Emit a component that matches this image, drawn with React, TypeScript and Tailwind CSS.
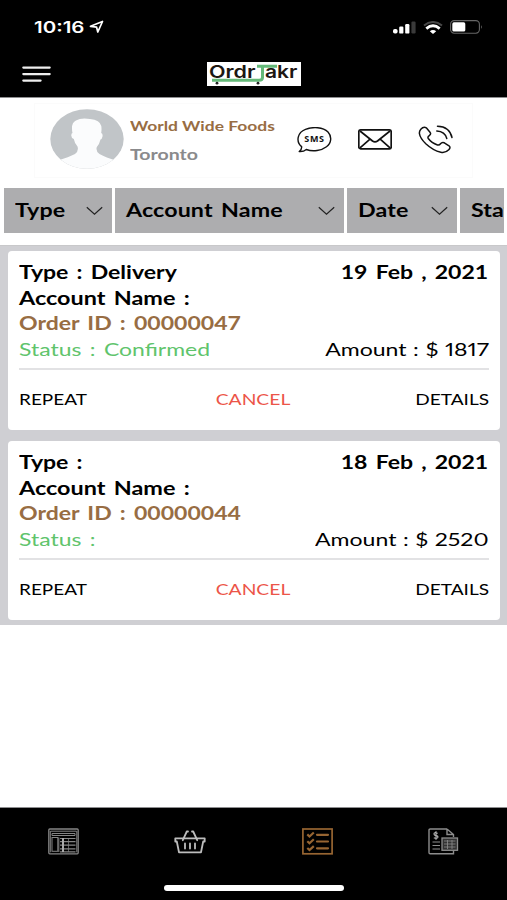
import clsx from "clsx";
import type { ReactNode } from "react";

const ORDERS = [
  {
    id: "00000047",
    type: "Delivery",
    account: "",
    status: "Confirmed",
    date: "19 Feb , 2021",
    amount: 1817,
  },
  {
    id: "00000044",
    type: "",
    account: "",
    status: "",
    date: "18 Feb , 2021",
    amount: 2520,
  },
];

type Order = (typeof ORDERS)[number];

const FILTERS = [
  { label: "Type", width: "w-[108px]" },
  { label: "Account Name", width: "w-[229px]" },
  { label: "Date", width: "w-[110px]" },
  { label: "Status", width: "w-[130px]" },
];

type WideProps = {
  children: ReactNode;
  className?: string;
};

// Lato stretched sideways, grows away from its origin
function Wide({ children, className }: WideProps) {
  return (
    <span className={clsx("inline-block whitespace-pre", className)}>
      {children}
    </span>
  );
}

function StatusBar() {
  return (
    <div className="flex h-[54px] items-center justify-between pl-[34px] pr-6 text-white">
      <div className="flex items-center">
        <span className="w-[55px] whitespace-pre font-['Inter'] text-base font-semibold">
          <span className="inline-block origin-left scale-x-[1.28]">10:16</span>
        </span>
        <svg width="16" height="14" viewBox="0 0 16 14" fill="none">
          <path
            d="M1.5 6.3 13.5 1.5 8.8 12 7.6 7.2Z"
            stroke="#fff"
            strokeWidth="1.7"
            strokeLinejoin="round"
          />
        </svg>
      </div>
      <div className="flex items-center gap-[7px]">
        <svg width="23" height="13" viewBox="0 0 23 13" fill="#fff">
          <rect x="0" y="8" width="4.6" height="4.6" rx="1.8" />
          <rect x="6.2" y="5.5" width="4.2" height="7.1" rx="1.2" />
          <rect x="12.2" y="3" width="4.2" height="9.6" rx="1.2" />
          <rect x="18.4" y="0.5" width="4.2" height="12" rx="1.2" fill="#3a3a3a" />
        </svg>
        <svg width="20" height="13" viewBox="0 0 20 13" fill="none">
          <path d="M1 4.5Q10-2.5 19 4.5" stroke="#484848" strokeWidth="2" />
          <path d="M3.3 7.6Q10 2 16.7 7.6" stroke="#fff" strokeWidth="2.8" />
          <path d="M6.8 10.2Q10 7.6 13.2 10.2L10 13Z" fill="#fff" />
        </svg>
        <svg width="33" height="14" viewBox="0 0 33 14" fill="none">
          <rect
            x="0.6"
            y="0.6"
            width="28.8"
            height="12.6"
            rx="3.6"
            stroke="#666"
            strokeWidth="1.1"
          />
          <rect x="2.3" y="2.3" width="13" height="9.3" rx="1.6" fill="#fff" />
          <path d="M31 5q1.6 2 0 4z" fill="#777" />
        </svg>
      </div>
    </div>
  );
}

function Logo() {
  return (
    <div className="relative h-6 w-[94px] bg-white font-['Inter'] text-[17.5px] font-semibold leading-none text-[#1d1712]">
      {/* the T of the name is a shopping cart */}
      <svg
        className="absolute inset-0"
        width="94"
        height="24"
        viewBox="0 0 94 24"
        fill="none"
      >
        <path
          d="M50 4.2H70M55.5 4.2V15.500Q55.5 18.2 52 18.2H5"
          stroke="#64b978"
          strokeWidth="3"
        />
        <circle cx="10" cy="21.2" r="1.4" fill="#222" />
        <circle cx="51" cy="21.2" r="1.4" fill="#222" />
      </svg>
      <span className="absolute left-[1.5px] top-[0.5px] origin-left scale-x-[1.23]">
        Ordr
      </span>
      <span className="absolute left-[58px] top-[0.5px] origin-left scale-x-[1.2]">
        akr
      </span>
    </div>
  );
}

function Header() {
  return (
    <header className="h-[98px] border-b border-[#8e8e90] bg-black">
      <StatusBar />
      <div className="flex items-center pl-[22px] pt-2">
        <svg width="29" height="16" viewBox="0 0 29 16" stroke="#eee">
          <path
            d="M1.3 1.6H27.7M1.3 8.1H27.7M1.3 14.6H18.6"
            strokeWidth="2.2"
            strokeLinecap="round"
          />
        </svg>
        <div className="ml-[156px]">
          <Logo />
        </div>
      </div>
    </header>
  );
}

function Avatar() {
  return (
    <svg width="74" height="60" viewBox="0 0 74 60">
      <defs>
        <clipPath id="avatar">
          <ellipse cx="37" cy="30" rx="36.7" ry="29.7" />
        </clipPath>
      </defs>
      <g clipPath="url(#avatar)">
        <rect width="74" height="60" fill="#c1c5c8" />
        <path
          d="M8 51.5Q19 48 25 45Q29 42 27.5 37.5Q24.5 34 23.8 30Q21 29 21.3 26Q21.5 24 22.5 24Q20.5 14 26 11.5Q31 8.5 40 10Q50 11 51.3 17Q51.8 20 51.2 24Q53 24.5 52.5 27.5Q52 30 50.5 30.5Q49.5 35 46.8 38Q45.5 42.5 49.5 45Q56 48.5 66 51.5V62H8Z"
          fill="#fbfcfd"
        />
      </g>
    </svg>
  );
}

function ContactActions() {
  return (
    <div className="flex items-center">
      <div className="relative flex h-[26px] w-[35px] items-center justify-center">
        <svg
          className="absolute inset-0"
          width="35"
          height="26"
          viewBox="0 0 35 26"
          fill="none"
          stroke="#111"
          strokeWidth="1.4"
          strokeLinejoin="round"
        >
          <path d="M4.6 19.6C-1.5 14.5 .5 5.2 8.5 2.3C16-.4 26-.1 31 5C35 9.3 34.6 16 29.5 19.7C24.5 23.6 16 24.9 9.3 22.5Q6.5 24.9 2.2 24.5Q5 22.5 4.6 19.6Z" />
        </svg>
        <span className="relative -top-px font-['Open_Sans'] text-[9px] font-bold leading-none tracking-[0.7px] text-[#111]">
          SMS
        </span>
      </div>
      <svg
        className="ml-[26px]"
        width="34"
        height="21"
        viewBox="0 0 34 21"
        fill="none"
        stroke="#111"
        strokeWidth="1.7"
        strokeLinejoin="round"
      >
        <rect x="0.8" y="0.9" width="32.4" height="18.9" rx="1.8" />
        <path d="M2 2 14.5 12Q17 13.7 19.5 12L32 2M2 18.9 12 10.2M32 18.9 22.2 10.2" />
      </svg>
      <svg
        className="ml-[26px]"
        width="36"
        height="29"
        viewBox="0 0 36 29"
        fill="none"
        stroke="#111"
        strokeWidth="1.5"
        strokeLinecap="round"
        strokeLinejoin="round"
      >
        <path d="M2.800 4.2Q5.5 1.3 8.3 2.8L12 7.2Q13.500 9 11.3 10.7Q9.300 12 10.3 13.5Q13.500 18 19.500 20Q21.300 20.500 22.500 18.800Q24 16.800 26.300 17.800L31 20.800Q33 22.500 30.800 24.800Q27.500 28.300 22.800 27.300Q15 25.500 7.800 18.800Q2 13 1.400 8.500Q1.200 6 2.800 4.2Z" />
        <path d="M19.5 1.2Q31.5 1.5 34 12.5M18.8 6Q27 6.5 28.8 13.5" />
      </svg>
    </div>
  );
}

function AccountPanel() {
  return (
    <section className="mx-[34px] mt-[5px] flex h-[75px] items-start border border-[#fbfbfb] bg-white font-['Lato'] font-bold">
      <div className="ml-[15px] mt-[5px]">
        <Avatar />
      </div>
      <div className="ml-[6px] mt-[10px] flex w-[167px] flex-col items-start">
        <Wide className="origin-left scale-x-[1.245] text-[14px] leading-6 text-[#986d43]">
          World Wide Foods
        </Wide>
        <Wide className="mt-1 origin-left scale-x-[1.3] text-[15px] leading-6 text-[#8a8a8c]">
          Toronto
        </Wide>
      </div>
      <div className="mt-[21px]">
        <ContactActions />
      </div>
    </section>
  );
}

function FilterBar() {
  return (
    <div className="mx-[3px] mt-[10px] flex h-[45px] gap-[3px] overflow-hidden pl-px font-['Lato'] text-[18px] font-bold text-black">
      {FILTERS.map(({ label, width }) => (
        <button
          key={label}
          className={clsx(
            "flex shrink-0 items-center justify-between bg-[#adadaf] pl-[11px] pr-[9px] text-left",
            width
          )}
        >
          <Wide className="origin-left scale-x-[1.29] tracking-[0.1px] [word-spacing:2px]">
            {label}
          </Wide>
          <svg width="17" height="10" viewBox="0 0 17 10" fill="none">
            <path d="M.8 1.2 8.5 8.2 16.2 1.2" stroke="#222" strokeWidth="1.2" />
          </svg>
        </button>
      ))}
    </div>
  );
}

function OrderCard({ order }: { order: Order }) {
  return (
    <article className="h-[179px] rounded-sm bg-white px-[11px] pt-[9px] font-['Lato'] text-[18px] leading-[25.7px] text-black [word-spacing:2px]">
      <div className="flex justify-between font-bold">
        <Wide className="origin-left scale-x-[1.28]">
          Type : {order.type}
        </Wide>
        <Wide className="mr-px origin-right scale-x-[1.28]">
          {order.date}
        </Wide>
      </div>
      <div className="font-bold">
        <Wide className="origin-left scale-x-[1.3]">
          Account Name : {order.account}
        </Wide>
      </div>
      <div className="font-bold text-[#986d43]">
        <Wide className="origin-left scale-x-[1.28]">
          Order ID : {order.id}
        </Wide>
      </div>
      <div className="flex justify-between">
        <Wide className="origin-left scale-x-[1.275] text-[#60c46c]">
          Status : {order.status}
        </Wide>
        <Wide className="origin-right scale-x-[1.28] proportional-nums [word-spacing:0.5px]">
          Amount : $ {order.amount}
        </Wide>
      </div>
      <div className="mt-[5px] flex justify-between border-t-2 border-[#e2e2e4] pt-[17px] text-[15px]">
        <Wide className="origin-left scale-x-[1.265]">REPEAT</Wide>
        <Wide className="ml-[3px] origin-center scale-x-[1.285] text-[#ec5548]">
          CANCEL
        </Wide>
        <Wide className="origin-right scale-x-[1.27]">DETAILS</Wide>
      </div>
    </article>
  );
}

function DashboardIcon() {
  return (
    <svg width="31" height="27" viewBox="0 0 31 27" fill="none" stroke="#858585">
      <rect x="0.8" y="1" width="29.4" height="24.8" rx="1" strokeWidth="1.3" />
      <path d="M2.5 3.2H28.5M4 7.5V5.5H27V7.5H4" strokeWidth="1" />
      <rect x="4" y="9.5" width="5.8" height="13.8" strokeWidth="1" />
      <path d="M2.3 3V24.3M10.8 9.5V24M28.8 3V24.3" strokeWidth="1" />
      <path
        d="M12 10.5H27.5M12 13.6H27.5M12 17.2H27.5M12 20.8H27.5M12 23.8H27.5"
        strokeWidth="1.2"
      />
      <path d="M15 10V24" stroke="#aaa" strokeWidth="2" />
      <path d="M20.5 10V24" strokeWidth="0.7" />
    </svg>
  );
}

function BasketIcon() {
  return (
    <svg
      width="32"
      height="24"
      viewBox="0 0 32 24"
      fill="none"
      stroke="#bdbdbd"
      strokeWidth="1.8"
      strokeLinecap="round"
      strokeLinejoin="round"
    >
      <path d="M1.3 8.3H30.7V11.5H29.2L27 22.3H5L2.8 11.5H1.3Z" />
      <path d="M8.8 10.2 12.8 1.5H14M23.2 10.2 19.2 1.5H18M11 13.5V18.5M16 13.5V18.5M21 13.5V18.5" />
    </svg>
  );
}

function OrdersIcon() {
  return (
    <svg width="31" height="27" viewBox="0 0 31 27" fill="none" stroke="#976532">
      <rect x="0.9" y="1" width="29.2" height="24.8" strokeWidth="1.7" />
      <path
        d="M5.3 6.4 7.5 8.5 11.8 4.5M5.3 13.2 7.5 15.3 11.8 11.3M5.3 20 7.5 22.1 11.8 18.1"
        strokeWidth="2.2"
      />
      <path d="M15 6.8H26M15 13.5H26M15 20.3H26" strokeWidth="2.2" strokeLinecap="round" />
    </svg>
  );
}

function InvoiceIcon() {
  return (
    <svg width="31" height="27" viewBox="0 0 31 27" fill="none" stroke="#8d8d8d">
      <path
        d="M19 1H2.2Q1 1 1 2.2V24.5Q1 25.7 2.2 25.7H25.5V22.5M19 1 25.5 6.5V9M19 1V6.5H25.5"
        strokeWidth="1.4"
      />
      <path
        d="M9.8 5.3Q6 3.8 6 6Q6 7.3 8 7.6Q10.3 8 9.8 9.5Q9 11 5.8 9.8M8 3.2V11.8"
        stroke="#b5b5b5"
        strokeWidth="1.2"
      />
      <path d="M4.5 14H12M4.5 17.5H12M4.5 21H12" strokeWidth="1.2" />
      <rect x="14" y="10" width="15.5" height="12.3" fill="#333" strokeWidth="1.3" />
      <path
        d="M16 13H27.5M16 16H27.5M16 19H27.5M19.5 12V21M24 12V21"
        strokeWidth="0.8"
      />
    </svg>
  );
}

function TabBar() {
  return (
    <nav className="mt-auto flex h-[93px] flex-col items-center border-t border-[#8e8e90] bg-black">
      <div className="flex h-[67px] w-full items-center justify-around">
        <DashboardIcon />
        <BasketIcon />
        <OrdersIcon />
        <InvoiceIcon />
      </div>
      <div className="mt-[10px] h-[6px] w-[180px] rounded-full bg-white" />
    </nav>
  );
}

function App() {
  return (
    <div className="flex h-[900px] w-[507px] flex-col overflow-hidden bg-white">
      <Header />
      <AccountPanel />
      <FilterBar />
      <main className="mt-[12px] flex flex-col gap-[11px] border-t border-[#c8c8ca] bg-[#cfcfd3] pb-[5px] pl-2 pr-[7px] pt-[5px]">
        {ORDERS.map((order) => (
          <OrderCard key={order.id} order={order} />
        ))}
      </main>
      <TabBar />
    </div>
  );
}

export default App;
